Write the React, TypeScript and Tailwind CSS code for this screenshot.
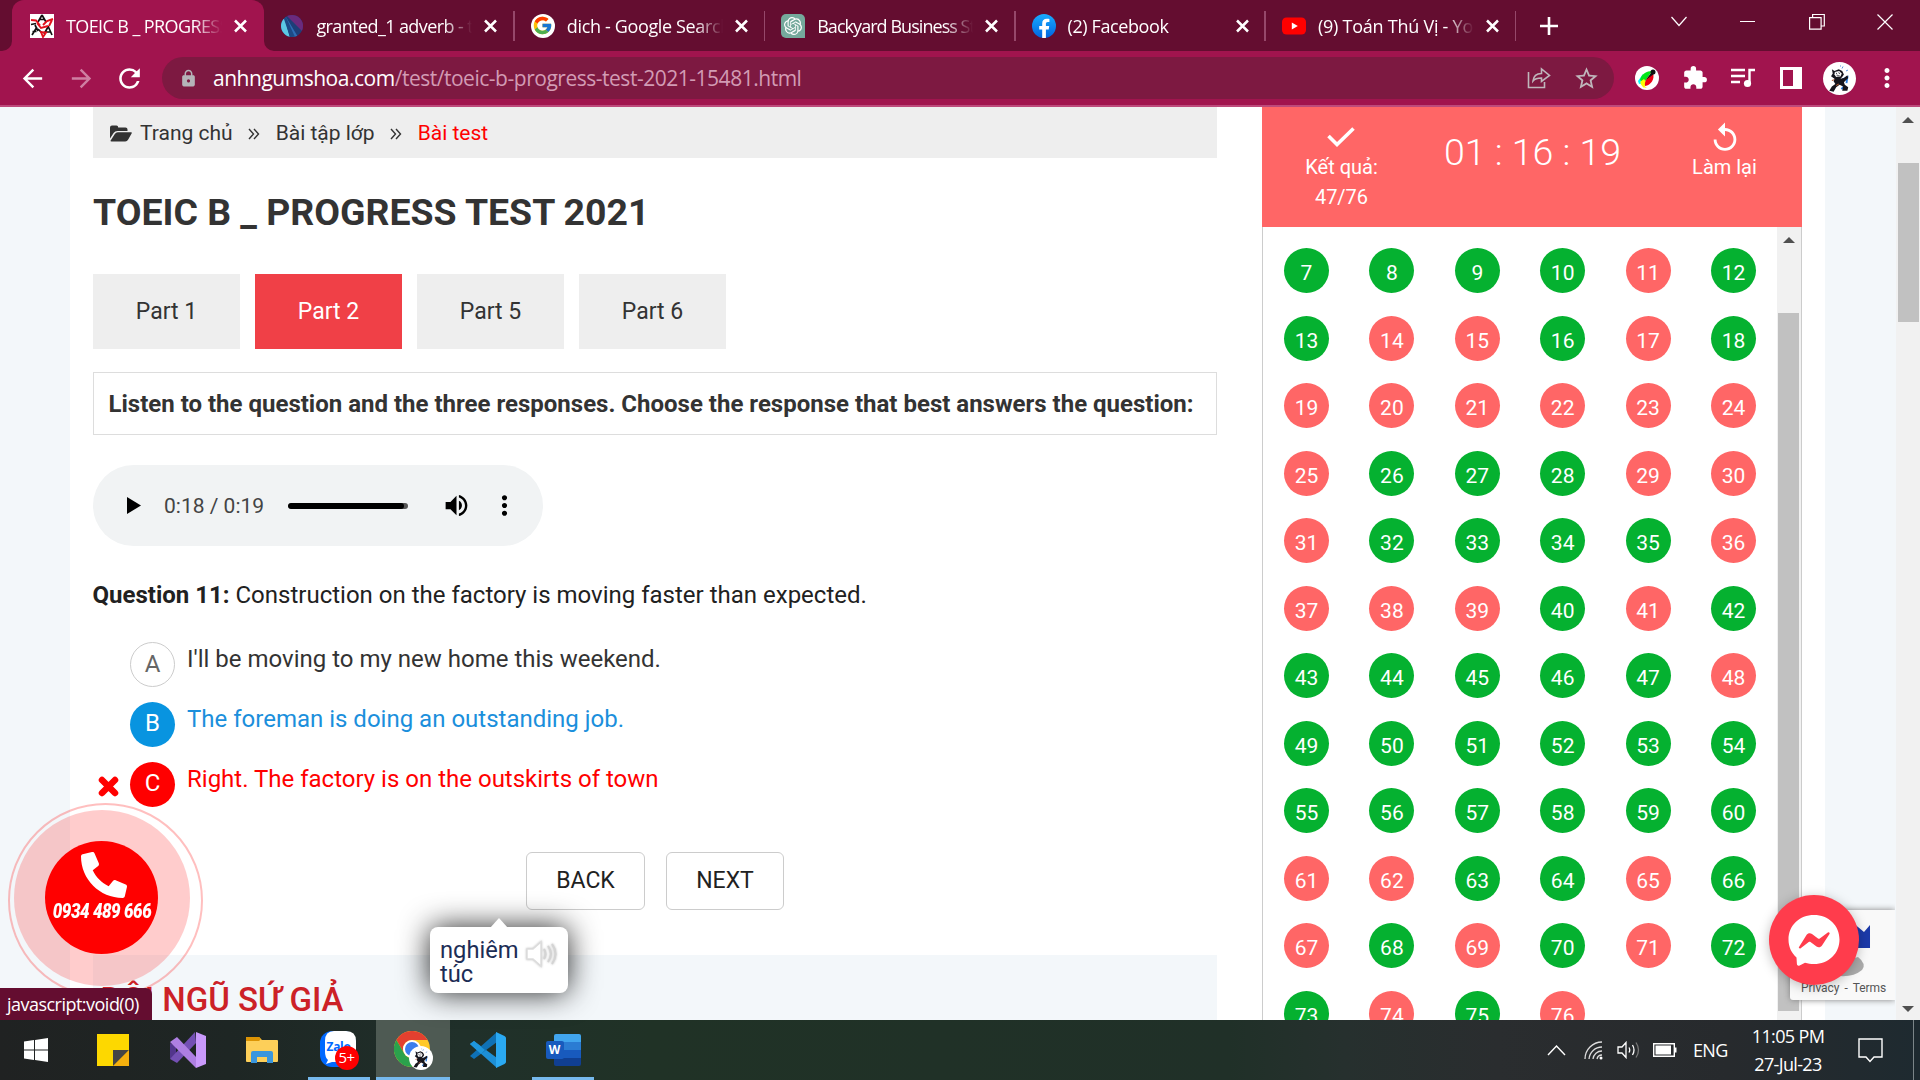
import React from "react";
import { MdArrowBack, MdArrowForward, MdRefresh, MdLock, MdStarBorder, MdExtension, MdQueueMusic, MdMoreVert, MdVolumeUp, MdReplay } from "react-icons/md";
import { FaPhone } from "react-icons/fa";
import { SiOpenai } from "react-icons/si";
import { FcGoogle } from "react-icons/fc";

const RED = new Set([11, 14, 15, 17, 19, 20, 21, 22, 23, 24, 25, 29, 30, 31, 36, 37, 38, 39, 41, 48, 61, 62, 65, 67, 69, 71, 74, 76]);
const NUMBERS = Array.from({ length: 70 }, (_, i) => i + 7);

/* ---------- browser chrome ---------- */

function CloseX() {
  return (
    <svg className="w-[13px] h-[14px] shrink-0" viewBox="0 0 13 14" stroke="#fff" strokeWidth="2.500">
      <path d="M1 1.500L12 12.500M12 1.500L1 12.500" />
    </svg>
  );
}

function FavToeic() {
  return (
    <svg width="24" height="24" viewBox="0 0 24 24" fill="none">
      <rect width="24" height="24" fill="#fff" />
      <path d="M12 1L8 8M12 1l4 7M9.500 5.500h5M1 10.500l5-1M5 11l3 6M2 21l5-8M2.500 17.500h4M8 15l4 4M18 12l4 9M14 20l4-7M16 18h5" stroke="#111" strokeWidth="1.700" />
      <path d="M1 6l5 .5 4 5M13 11l4-4 6-2M22 6l-3 6M7 9l4 5 7-2M11 18l2 5 3-4.500z" stroke="#e3101c" strokeWidth="1.900" />
    </svg>
  );
}

function FavOrb() {
  return (
    <svg width="24" height="24" viewBox="0 0 24 24">
      <defs>
        <clipPath id="orb"><circle cx="12" cy="12" r="11" /></clipPath>
      </defs>
      <g clipPath="url(#orb)">
        <rect width="24" height="24" fill="#1d3e78" />
        <path d="M5 0h20v20z" fill="#6b2a7d" />
        <path d="M6 3l12 20-4 2L3 6z" fill="#2d6db5" />
        <path d="M0 5l5 0 5 19H0z" fill="#5cc8e4" />
        <path d="M4 5l6 18 5 0L6 3z" fill="#1c4a86" />
      </g>
    </svg>
  );
}

function FavFacebook() {
  return (
    <svg width="24" height="24" viewBox="0 0 24 24">
      <defs>
        <linearGradient id="fb" x1="0" y1="0" x2="0" y2="1"><stop offset="0" stopColor="#18acfe" /><stop offset="1" stopColor="#0163e0" /></linearGradient>
      </defs>
      <circle cx="12" cy="12" r="12" fill="url(#fb)" />
      <path d="M16.7 15.5l.5-3.5h-3.3V9.8c0-1 .5-1.9 2-1.9h1.5V5s-1.4-.2-2.700-.2c-2.700 0-4.500 1.600-4.500 4.600V12h-3v3.500h3v8.400a12 12 0 0 0 3.700 0v-8.400z" fill="#fff" />
    </svg>
  );
}

function FavYoutube() {
  return (
    <svg width="24" height="24" viewBox="0 0 24 24">
      <rect y="3.500" width="24" height="17" rx="4.500" fill="#f00" />
      <path d="M9.800 8.500l6 3.500-6 3.500z" fill="#fff" />
    </svg>
  );
}

function FavGoogle() {
  return (
    <div className="w-6 h-6 rounded-full bg-white flex items-center justify-center">
      <FcGoogle size={21} />
    </div>
  );
}

function FavOpenAI() {
  return (
    <div className="w-6 h-6 rounded-tl-[5px] rounded-tr-[5px] rounded-bl-[5px] bg-[#75a99c] flex items-center justify-center">
      <SiOpenai size={18} color="#fff" />
    </div>
  );
}

const TABS = [
  { icon: <FavToeic />, title: "TOEIC B _ PROGRESS", track: "tracking-[-0.6px]" },
  { icon: <FavOrb />, title: "granted_1 adverb - t", track: "tracking-[-0.6px]" },
  { icon: <FavGoogle />, title: "dich - Google Search", track: "tracking-[-0.35px]" },
  { icon: <FavOpenAI />, title: "Backyard Business Sta", track: "tracking-[-0.95px]" },
  { icon: <FavFacebook />, title: "(2) Facebook", track: "tracking-[-0.4px]" },
  { icon: <FavYoutube />, title: "(9) Toán Thú Vị - You", track: "tracking-[-0.25px]" },
];

function TabStrip() {
  return (
    <div className="h-[51px] bg-[#640d30] flex items-stretch pl-[14px] font-['Open_Sans',sans-serif] text-white">
      {TABS.map((t, i) => (
        <div key={i} className="relative w-[250.400px] shrink-0 flex items-center pl-4">
          {i === 0 && (
            <>
              <div className="absolute left-[-2px] right-0 top-0 bottom-0 rounded-t-[12px] bg-[#a1144e]" />
              <svg className="absolute left-[-12px] bottom-0" width="10" height="10"><path d="M10 0v10H0A10 10 0 0 0 10 0z" fill="#a1144e" /></svg>
              <svg className="absolute right-[-10px] bottom-0" width="10" height="10"><path d="M0 0v10h10A10 10 0 0 1 0 0z" fill="#a1144e" /></svg>
            </>
          )}
          <div className="relative w-6 h-6 shrink-0">{t.icon}</div>
          <div className={"relative ml-3 w-[156px] overflow-hidden whitespace-nowrap text-[18px] leading-[30px] [mask-image:linear-gradient(to_right,#000_82%,transparent_100%)] " + t.track}>{t.title}</div>
          <div className="relative ml-[12px]"><CloseX /></div>
          {i > 0 && <div className="absolute right-0 top-[11px] h-[30px] w-[1.5px] bg-[#96486a]" />}
        </div>
      ))}
      <div className="w-[66px] flex items-center justify-center">
        <svg width="20" height="20" stroke="#fff" strokeWidth="2.600"><path d="M10 1v18M1 10h18" /></svg>
      </div>
      <div className="ml-auto flex h-[43px] items-center w-[276px]">
        <div className="w-[69px] flex justify-center"><svg width="16" height="11" fill="none" stroke="#fff" strokeWidth="1.200"><path d="M.5 1L8 9.500 15.500 1" /></svg></div>
        <div className="w-[69px] flex justify-center"><div className="w-[15px] h-px bg-white" /></div>
        <div className="w-[69px] flex justify-center"><svg width="16" height="16" fill="none" stroke="#fff" strokeWidth="1.200"><path d="M.6 3.600h11.500v11.500H.6zM3.600 3.500v-3h11.700V12h-3" /></svg></div>
        <div className="w-[69px] flex justify-center pr-px"><svg width="16" height="16" fill="none" stroke="#fff" strokeWidth="1.200"><path d="M.5.5l15 15M15.500.5l-15 15" /></svg></div>
      </div>
    </div>
  );
}

function Felix({ size }: { size: number }) {
  return (
    <svg width={size} height={size} viewBox="0 0 33 33">
      <circle cx="16.500" cy="16.500" r="16.500" fill="#fff" />
      <g transform="translate(2 3) scale(.86)">
        <path d="M20 17l6-3-1 7M19 28l4-4" stroke="#2c7fe0" strokeWidth="2.200" fill="none" />
        <path d="M8 5l3 2 5-2 4 2 2 4-2 3-2 2 4-1 4-3 1 3-5 5 1 3 4 3-1 4h-6l1-5-4-2-4 3-3 5-5-1 3-5 4-3-2-3 1-3-4-3 2-3z" fill="#15151c" />
        <path d="M11.500 8l5-1 3 3-1.500 3.500-5 .5-2-3z" fill="#fff" />
        <path d="M13 9l1 2M16 8.500l1 2M13.500 12.500h3.500" stroke="#15151c" strokeWidth=".9" />
        <path d="M8 18l3-1M13 24l3-2" stroke="#b0562c" strokeWidth="1.200" />
      </g>
      <path d="M19 6.500l1-2M23 9l2-1M17 4l1 0" stroke="#5b93dd" strokeWidth="1" />
    </svg>
  );
}

function Toolbar() {
  return (
    <div className="h-[56px] bg-[#a1144e] border-b-2 border-[#bd4a7b] flex items-center text-white">
      <div className="w-[64px] flex justify-center"><MdArrowBack size={29} /></div>
      <div className="w-[34px] flex justify-center text-[#cf7fa2]"><MdArrowForward size={29} className="shrink-0" /></div>
      <div className="w-[64px] flex justify-center pr-[2px] shrink-0"><MdRefresh size={31} /></div>
      <div className="w-[1452px] h-[42px] rounded-full bg-[#7d1941] flex items-center">
        <div className="w-[51px] pl-[2px] flex justify-center text-[#b5b3b8]"><MdLock size={19} /></div>
        <div className="font-['Open_Sans',sans-serif] text-[21px] leading-[42px] tracking-[-0.480px] text-[#d29bb4] whitespace-nowrap">
          <span className="text-white">anhngumshoa.com</span>/test/toeic-b-progress-test-2021-15481.html
        </div>
        <div className="ml-auto w-[48px] flex justify-center pr-[2px]">
          <svg width="24" height="24" viewBox="0 0 24 24" fill="none" stroke="#bfb6bb" strokeWidth="1.600">
            <path d="M1.500 6v15.500h16V16" />
            <path d="M6 15c.5-5 4-7.500 8.500-7.500V3l8 6.500-8 6V12C11 12 8 12.500 6 15z" />
          </svg>
        </div>
        <div className="w-[50px] flex justify-center text-[#bfb6bb] pr-[5px]"><MdStarBorder size={27} /></div>
      </div>
      <div className="w-[66px] flex justify-center">
        <svg width="24" height="24" viewBox="0 0 24 24">
          <circle cx="12" cy="12" r="12" fill="#fff" />
          <path d="M4 16l8 6-4-1z" fill="#ff0" />
          <path d="M3 15l5-7 0 9-4 1z" fill="#0ff" />
          <path d="M5 14C6 8 12 5 17 5L9 17z" fill="#00e51a" />
          <path d="M5 16l4-3 2 3-2 6z" fill="#ff0" />
          <path d="M10 20c-1-5 3-10 8-13 2 6-2 12-8 13z" fill="#f00016" />
          <path d="M11 14l7-10 2 3z" fill="#111" />
          <circle cx="18" cy="6" r="2.500" fill="#111" />
        </svg>
      </div>
      <div className="w-[30px] flex justify-center"><MdExtension size={26} className="shrink-0" /></div>
      <div className="w-[66px] flex justify-center">
        <svg width="24" height="20" fill="none" stroke="#fff" strokeWidth="2.400"><path d="M0 2h14M0 8h14M0 14h9M18.500 15V2H24" /><circle cx="16.500" cy="15.500" r="3.600" fill="#fff" stroke="none" /></svg>
      </div>
      <div className="w-[30px] flex justify-center"><div className="w-[22px] h-[22px] border-[3px] border-r-[9px] border-white shrink-0" /></div>
      <div className="w-[67px] flex justify-center"><Felix size={33} /></div>
      <div className="w-[28px] flex justify-center"><MdMoreVert size={30} className="shrink-0" /></div>
    </div>
  );
}

/* ---------- page ---------- */

function Chevrons() {
  return (
    <svg width="12" height="12" viewBox="0 0 12 12" fill="none" stroke="#333" strokeWidth="1.400"><path d="M1 1l4.500 5L1 11M6 1l4.500 5L6 11" /></svg>
  );
}

function FolderOpen() {
  return (
    <svg width="22" height="17" viewBox="0 0 22 17" fill="#333">
      <path d="M0 13.500V2.500Q0 .5 2 .5h4.500q1.700 0 1.700 2h7.300q2 0 2 2V6H7.500Q5 6 3.600 8z" />
      <path d="M.5 15.800L4.800 9q1-1.700 3-1.700H21q1.400 0 .6 1.300L18.200 14.600q-1 1.900-3 1.900H1.500Q.2 16.500.5 15.800z" />
    </svg>
  );
}

function AudioPlayer() {
  return (
    <div className="mt-[30px] w-[450px] h-[81px] rounded-full bg-[#f1f3f4] flex items-center pl-[34px]">
      <svg width="14" height="17"><path d="M0 0l14 8.500L0 17z" fill="#000" /></svg>
      <div className="ml-[23px] w-[124px] text-[21px] leading-8 text-[#444]">0:18 / 0:19</div>
      <div className="w-[120px] h-[6px] rounded-full bg-[#555] overflow-hidden"><div className="w-[116px] h-full rounded-full bg-black" /></div>
      <MdVolumeUp size={29} className="ml-[34px] text-black" />
      <MdMoreVert size={31} className="ml-[18px] text-black" />
    </div>
  );
}

function Answer({ letter, text, circle, color, wrong }: { letter: string; text: string; circle: string; color: string; wrong?: boolean }) {
  return (
    <div className="h-[60px] flex items-start">
      <div className="w-[37px] pl-[5px] pt-[14px]">
        {wrong && <svg width="21" height="21" stroke="#f00" strokeWidth="6.500" strokeLinecap="round"><path d="M4 4l13 13M17 4L4 17" strokeLinejoin="round" /></svg>}
      </div>
      <div className={"w-[45px] h-[45px] rounded-full text-center text-[24px] shrink-0 " + circle}>{letter}</div>
      <div className={"ml-[12px] text-[24px] leading-[35px] whitespace-nowrap " + color}>{text}</div>
    </div>
  );
}

function MainColumn() {
  const part = "w-[147px] h-[75px] flex items-center justify-center text-[23px] pt-[2px] ";
  return (
    <div className="w-[1124px] shrink-0">
      <div className="h-[51px] bg-[#eee] flex items-center pl-[17px] pt-[2px] text-[21px] text-[#333] whitespace-nowrap">
        <FolderOpen />
        <span className="ml-[8px]">Trang chủ</span>
        <span className="ml-[15px]"><Chevrons /></span>
        <span className="ml-[16px]">Bài tập lớp</span>
        <span className="ml-[15px]"><Chevrons /></span>
        <span className="ml-[16px] text-[#f00]">Bài test</span>
      </div>
      <h1 className="mt-[27px] text-[37.400px] leading-[54px] font-bold text-[#333] whitespace-nowrap">TOEIC B _ PROGRESS TEST 2021</h1>
      <div className="mt-[35px] flex gap-[15px]">
        <div className={part + "bg-[#eee] text-[#333]"}>Part 1</div>
        <div className={part + "bg-[#f04047] text-white"}>Part 2</div>
        <div className={part + "bg-[#eee] text-[#333]"}>Part 5</div>
        <div className={part + "bg-[#eee] text-[#333]"}>Part 6</div>
      </div>
      <div className="mt-[23px] h-[63px] border border-[#ddd] flex items-center pl-[14.500px] text-[24px] font-bold text-[#333] whitespace-nowrap">
        Listen to the question and the three responses. Choose the response that best answers the question:
      </div>
      <AudioPlayer />
      <div className="mt-[31px] text-[24px] leading-[36px] text-[#212121] whitespace-nowrap -ml-[0.5px]"><b>Question 11:</b> Construction on the factory is moving faster than expected.</div>
      <div className="mt-[29px]">
        <Answer letter="A" text="I'll be moving to my new home this weekend." circle="border border-[#ccc] text-[#666] leading-[42px]" color="text-[#333]" />
        <Answer letter="B" text="The foreman is doing an outstanding job." circle="bg-[#0894e0] text-white leading-[43px]" color="text-[#1b8fdc]" />
        <Answer letter="C" text="Right. The factory is on the outskirts of town" circle="bg-[#f00] text-white leading-[43px]" color="text-[#f00]" wrong />
      </div>
      <div className="mt-[30px] flex justify-center gap-[21px] pl-0">
        <div className="w-[119px] h-[58px] rounded-[6px] border border-[#ccc] text-[23px] leading-[56px] text-center text-[#212121]">BACK</div>
        <div className="w-[118px] h-[58px] rounded-[6px] border border-[#ccc] text-[23px] leading-[56px] text-center text-[#212121]">NEXT</div>
      </div>
      <div className="mt-[45px] h-[65px] bg-[#f3f7fa] pl-[7px] pt-[25px] text-[33px] leading-[40px] font-medium text-[#cc2127] whitespace-nowrap">ĐỘI NGŨ SỨ GIẢ</div>
    </div>
  );
}

function ResultPanel() {
  return (
    <div className="ml-[45px] w-[540px] shrink-0 flex flex-col">
      <div className="h-[120px] bg-[#ff6666] text-white flex items-start text-[20px]">
        <div className="w-[157px] pt-[20px] flex flex-col items-center">
          <svg width="28" height="20" fill="none" stroke="#fff" strokeWidth="3.600"><path d="M1.500 9L10 17.500 26.500 1.500" /></svg>
          <div className="mt-[5px] leading-[30px] pl-[2px]">Kết quả:</div>
          <div className="leading-[30px] pl-[2px]">47/76</div>
        </div>
        <div className="w-[227px] pt-[17px] text-center text-[37.500px] leading-[56px] font-light whitespace-nowrap">01 : 16 : 19</div>
        <div className="w-[156px] pt-[14px] pl-[1px] flex flex-col items-center">
          <MdReplay size={34} />
          <div className="-mt-[3px] leading-[30px]">Làm lại</div>
        </div>
      </div>
      <div className="flex-1 flex border-x border-[#ccc] overflow-hidden">
        <div className="w-[513.500px] pl-[21px] pt-[21px] grid grid-cols-[repeat(6,85.4px)] auto-rows-[67.5px]">
          {NUMBERS.map((n) => (
            <div key={n} className={"w-[45px] h-[45px] rounded-full text-center text-[21px] leading-[50px] text-white " + (RED.has(n) ? "bg-[#ff6666]" : "bg-[#05b130]")}>{n}</div>
          ))}
        </div>
        <div className="w-[24px] bg-[#f1f1f1] flex flex-col items-center pt-[10px]">
          <svg width="12" height="6"><path d="M0 6L6 0l6 6z" fill="#505050" /></svg>
          <div className="mt-[70px] w-[21px] h-[698px] bg-[#c1c1c1]" />
        </div>
      </div>
    </div>
  );
}

/* ---------- floating widgets ---------- */

function CallBubble() {
  return (
    <div className="absolute left-[8px] top-[803px] w-[195px] h-[195px] rounded-full border-2 border-[#ff0000]/25">
      <div className="absolute left-[4px] top-[5px] w-[176px] h-[176px] rounded-full bg-[#ff0000]/20" />
      <div className="absolute left-[35px] top-[36px] w-[113px] h-[113px] rounded-full bg-[#f00] text-white">
        <FaPhone size={46} className="absolute left-[36px] top-[11px] [transform:scaleX(-1)]" />
        <div className="absolute left-[-3px] top-[59px] w-[120px] text-center whitespace-nowrap font-['Roboto',sans-serif] font-black italic text-[19.500px] leading-[24px] tracking-[-0.5px] [transform:scaleX(0.87)]">0934 489 666</div>
      </div>
    </div>
  );
}

function WordTooltip() {
  return (
    <div className="absolute left-[430px] top-[927px] w-[138px] h-[66px] rounded-[8px] bg-white shadow-[0_0_30px_rgba(0,0,0,0.85)]">
      <svg className="absolute left-[60px] top-[-9px]" width="18" height="10"><path d="M9 0l9 10H0z" fill="#fff" /></svg>
      <div className="flex pl-[10px] pt-[11px] text-[23.700px] leading-[24px] text-[#1c2d55]">
        <div className="w-[84px]">nghiêm túc</div>
        <svg className="mt-[2px] drop-shadow-[0_0_1px_#bbb]" width="34" height="28" viewBox="0 0 34 28" fill="none">
          <path d="M3 9h6l8-7v24l-8-7H3z" fill="#fff" stroke="#ddd" strokeWidth="1.500" />
          <path d="M20 9q3 5 0 10M24 6q6 8 0 16M28 4q7 10 0 20" stroke="#d4d4d4" strokeWidth="2" />
        </svg>
      </div>
    </div>
  );
}

function Recaptcha() {
  return (
    <div className="absolute left-[1790px] top-[910px] w-[105px] h-[90px] rounded-l-[3px] bg-[#f9f9f9] shadow-[0_0_6px_#808080] [clip-path:inset(-8px_0_-8px_-8px)]">
      <svg className="absolute left-0 top-0" width="105" height="90">
        <path d="M62 12l12 10 6-7v23H62z" fill="#1c3aa9" />
        <path d="M38 56l30-9q9 7 4 13-12 10-34 4z" fill="#ababab" />
      </svg>
      <div className="absolute left-[11px] top-[68px] text-[12px] leading-[20px] tracking-[-0.05px] text-[#555] whitespace-nowrap">Privacy<span className="px-[5px]">-</span>Terms</div>
    </div>
  );
}

function Messenger() {
  return (
    <div className="absolute left-[1769px] top-[895px] w-[90px] h-[90px] rounded-full bg-[#ff3c4c] shadow-[0_2px_12px_rgba(0,0,0,0.25)] flex items-center justify-center">
      <svg width="52" height="52" viewBox="0 0 52 52">
        <path d="M26 1C11.500 1 .5 11.500.5 25.500c0 7.500 3 13.500 8 18l.4 6.500c.2 1.500 1.400 2 2.700 1.400l5.400-2.600c3 .9 5.800 1.200 9 1.200 14.500 0 25.500-10.500 25.500-24.500S40.500 1 26 1z" fill="#fff" />
        <path d="M11 33l7.500-12c1.200-1.900 3.700-2.300 5.500-1l6 4.500c.6.400 1.300.4 1.800 0l8-6c1-.8 2.400.4 1.700 1.500L34 31.500c-1.200 1.900-3.700 2.300-5.500 1l-6-4.500c-.6-.4-1.200-.4-1.800 0l-8 6.200c-1 .7-2.400-.4-1.700-1.200z" fill="#ff3c4c" />
      </svg>
    </div>
  );
}

/* ---------- taskbar ---------- */

function TaskCell({ children, w, line, active }: { children: React.ReactNode; w: string; line?: boolean; active?: boolean }) {
  return (
    <div className={"relative h-full flex items-center justify-center shrink-0 " + w + (active ? " bg-[#4e5a53]" : "")}>
      {children}
      {line && <div className={"absolute bottom-0 h-[3px] bg-[#76b9ed] " + (active ? "left-0 right-0" : "left-[6px] right-[6px]")} />}
    </div>
  );
}

function Taskbar() {
  return (
    <div className="h-[60px] flex items-center bg-[linear-gradient(to_right,#202222_0%,#1e2624_12%,#20302a_24%,#203226_34%,#203028_64%,#26302e_70%,#2a2d2f_78%,#272a2d_90%,#1e2a30_100%)] text-white font-['Open_Sans',sans-serif]">
      <TaskCell w="w-[72px]">
        <svg width="24" height="24" fill="#fff"><path d="M0 3.500l10-1.400v9.300H0zM11 2l13-2v11.400H11zM0 12.600h10V22L0 20.600zM11 12.600h13V24l-13-1.900z" /></svg>
      </TaskCell>
      <TaskCell w="w-[82px]">
        <svg width="32" height="32"><path d="M0 0h32v16L16 32H0z" fill="#fdd800" /><path d="M16 16h16L16 32z" fill="#454545" /><path d="M32 16v16H16z" fill="#f5b00e" /></svg>
      </TaskCell>
      <TaskCell w="w-[68px]">
        <svg width="36" height="36" viewBox="0 0 36 36">
          <path d="M0 11l6 3v10l-6 3z" fill="#52358c" />
          <path d="M0 27l25-27 1 11L7 31z" fill="#7450b4" />
          <path d="M0 10l7-5 19 20v11z" fill="#ae7fe2" />
          <path d="M26 0l10 4v28l-10 4z" fill="#c999fb" />
        </svg>
      </TaskCell>
      <TaskCell w="w-[80px]">
        <svg width="32" height="28" viewBox="0 0 32 28">
          <path d="M0 2q0-1 1-1h12l3 3H31q1 0 1 1v20q0 1-1 1H1q-1 0-1-1z" fill="#fdcf59" />
          <path d="M0 2q0-1 1-1h12l2 2-2 2H0z" fill="#dc9404" />
          <path d="M5 27V17q0-2 2-2h18q2 0 2 2v10h-6v-6H11v6z" fill="#3a96dd" />
        </svg>
      </TaskCell>
      <TaskCell w="w-[74px]" line>
        <div className="relative w-[39px] h-[39px]">
          <div className="absolute left-0 top-0 w-[36px] h-[36px] rounded-[12px] bg-[#0068ff]" />
          <svg className="absolute left-[4px] top-0" width="32" height="34"><path d="M10 0h12q10 0 10 10v11q0 10-10 10H8l-6 2 2-4q-3-3-3-8V10Q1 0 10 0z" fill="#fff" /></svg>
          <div className="absolute left-[7px] top-0 w-[28px] text-[#0068ff] font-bold text-[12px] leading-[31px] tracking-[-0.3px]">Zalo</div>
          <div className="absolute right-0 bottom-0 w-[24px] h-[24px] rounded-full bg-[#f00] text-[15px] leading-[23px] text-center tracking-[-0.5px]">5+</div>
        </div>
      </TaskCell>
      <TaskCell w="w-[74px]" line active>
        <div className="relative w-[39px] h-[39px]">
          <svg width="36" height="36" viewBox="0 0 36 36">
            <circle cx="18" cy="18" r="18" fill="#ffc928" />
            <path d="M2.400 9A18 18 0 0 1 33.600 9H18a9 9 0 0 0-7.800 13.500z" fill="#e3402f" />
            <path d="M2.400 9A18 18 0 0 0 18 36l7.800-13.500a9 9 0 0 1-15.600 0z" fill="#2ba24c" />
            <circle cx="18" cy="18" r="9" fill="#fff" /><circle cx="18" cy="18" r="7" fill="#3b7ded" />
          </svg>
          <div className="absolute right-0 bottom-0"><Felix size={24} /></div>
        </div>
      </TaskCell>
      <TaskCell w="w-[76px]">
        <svg width="36" height="36" viewBox="0 0 36 36">
          <path d="M0 12l4-3 23 17v10z" fill="#1d8fd6" />
          <path d="M0 24L27 0v10L4 27l-4-3z" fill="#0f71b5" />
          <path d="M0 12l4-3 11 9-4 4z" fill="#1f96dc" />
          <path d="M26 0l8.500 4q1.500.8 1.500 2v24q0 1.200-1.500 2L26 36z" fill="#2aa9f2" />
        </svg>
      </TaskCell>
      <TaskCell w="w-[74px]" line>
        <div className="relative w-[35px] h-[32px]">
          <div className="absolute right-0 top-0 w-[27px] h-[32px] rounded-[2px] bg-[linear-gradient(#41a5ee_25%,#2b7cd3_25%,#2b7cd3_50%,#185abd_50%,#185abd_75%,#103f91_75%)]" />
          <div className="absolute left-0 top-[7px] w-[18px] h-[18px] rounded-[2px] bg-[#185abd] text-[12px] leading-[18px] font-bold text-center">W</div>
        </div>
      </TaskCell>
      <div className="ml-auto flex items-center h-full text-[18px] tracking-[-0.650px] whitespace-nowrap">
        <svg width="19" height="11" fill="none" stroke="#fff" strokeWidth="1.400"><path d="M1 10l8.500-9L18 10" /></svg>
        <svg className="ml-[18px]" width="19" height="19" fill="none" stroke="#ddd" strokeWidth="1.300"><path d="M1 18A17 17 0 0 1 18 1M5 18A13 13 0 0 1 18 6M9 18a9 9 0 0 1 9-8M13 18a5 5 0 0 1 5-4" /><circle cx="17" cy="17" r="1.500" fill="#fff" stroke="none" /></svg>
        <svg className="ml-[14px]" width="23" height="18" fill="none" stroke="#fff" strokeWidth="1.300"><path d="M1 6h4l4-4.500v15L5 12H1zM12 6.500q1.500 2.500 0 5M15.500 4q3 5 0 10" /><path d="M19 1.500q5 7.500 0 15" stroke="#777" /></svg>
        <svg className="ml-[13px]" width="24" height="14"><path d="M.7.7h20.600v12.600H.7z" fill="none" stroke="#fff" strokeWidth="1.400" /><path d="M2.500 2.500H18v9H2.500zM22 4.500h1.500v5H22z" fill="#fff" /></svg>
        <div className="ml-[16px] w-[35px]">ENG</div>
        <div className="ml-[21px] w-[78px] text-center leading-[28px]">11:05 PM<br />27-Jul-23</div>
        <svg className="ml-[31px]" width="25" height="25" fill="none" stroke="#fff" strokeWidth="1.400"><path d="M1 1h23v18h-8l-4 4.500L8 19H1z" /></svg>
        <div className="ml-[30px] w-[7px] h-full border-l border-[#7b8588]" />
      </div>
    </div>
  );
}

export default function App() {
  return (
    <div className="relative w-[1920px] h-[1080px] overflow-hidden flex flex-col font-['Roboto',sans-serif]">
      <TabStrip />
      <Toolbar />
      <div className="h-[913px] flex bg-[#f3f7fa] overflow-hidden">
        <div className="ml-[70px] w-[1755px] pl-[23px] bg-white flex">
          <MainColumn />
          <ResultPanel />
        </div>
        <div className="ml-auto w-[24px] bg-[#f1f1f1] flex flex-col items-center pt-[10px]">
          <svg width="12" height="6"><path d="M0 6L6 0l6 6z" fill="#505050" /></svg>
          <div className="mt-[40px] w-[21px] h-[159px] bg-[#c1c1c1]" />
          <svg className="mt-auto mb-[8px]" width="12" height="6"><path d="M0 0h12L6 6z" fill="#505050" /></svg>
        </div>
      </div>
      <Taskbar />
      <CallBubble />
      <WordTooltip />
      <Recaptcha />
      <Messenger />
      <div className="absolute left-0 top-[988px] w-[152px] h-[32px] rounded-tr-[6px] bg-[#640d30] text-white pl-[7px] font-['Open_Sans',sans-serif] text-[18px] leading-[33px] tracking-[-0.520px] whitespace-nowrap">javascript:void(0)</div>
    </div>
  );
}
